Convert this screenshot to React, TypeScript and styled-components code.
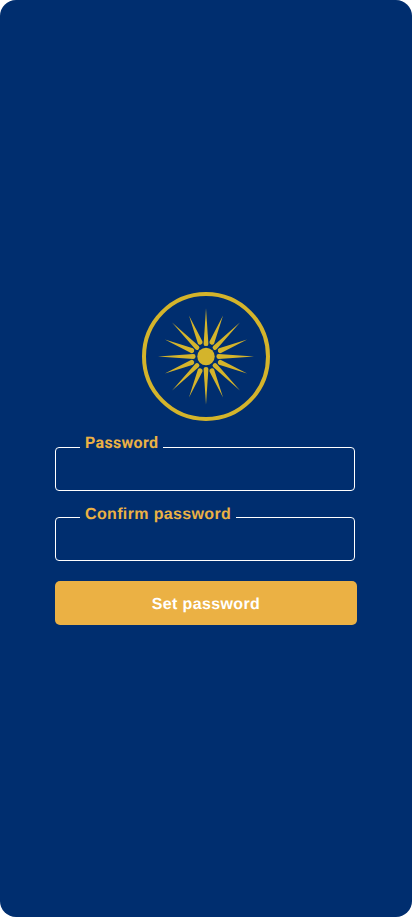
import React from "react";
import styled, { createGlobalStyle } from "styled-components";

const GlobalStyle = createGlobalStyle`
  *, *::before, *::after { box-sizing: border-box; }
  body { margin: 0; background: #ffffff; }
`;

const Screen = styled.main`
  width: 100%;
  min-height: 100vh;
  display: flex;
  flex-direction: column;
  align-items: center;
  justify-content: center;
  background: #002e6f;
  border-radius: 16px;
  font-family: "Liberation Sans", Arial, sans-serif;
`;

const Emblem = styled.svg`
  display: block;
  width: 128px;
  height: 129px;
  margin-bottom: 13px;
`;

const Form = styled.form`
  width: 302px;
  display: flex;
  flex-direction: column;
`;

const Field = styled.fieldset`
  width: 300px;
  height: 57px;
  min-width: 0;
  margin: 0 0 13px;
  padding: 0 10px 0 24px;
  border: 1px solid #ffffff;
  border-radius: 4px;
`;

const Label = styled.legend<{ $compact?: boolean }>`
  height: 27px;
  padding: 0 5px;
  line-height: ${(p) => (p.$compact ? "17px" : "21px")};
  font-family: ${(p) => (p.$compact ? 'Roboto, "Liberation Sans", sans-serif' : '"Liberation Sans", Arial, sans-serif')};
  font-size: 16px;
  font-weight: 700;
  letter-spacing: ${(p) => (p.$compact ? "0.32px" : "0.36px")};
  color: #ebb144;
  text-rendering: geometricPrecision;
`;

const Input = styled.input`
  display: block;
  width: 100%;
  height: 26px;
  padding: 0;
  border: 0;
  outline: 0;
  background: transparent;
  color: #ffffff;
  font: 16px "Liberation Sans", Arial, sans-serif;
`;

const Submit = styled.button`
  width: 302px;
  height: 44px;
  margin-top: 7px;
  padding: 4px 0 0;
  border: 0;
  border-radius: 5px;
  background: #ebb144;
  color: #ffffff;
  font: 700 16px/40px "Liberation Sans", Arial, sans-serif;
  letter-spacing: 0.36px;
  text-rendering: geometricPrecision;
`;

const LONG_RAY = "M0 -48 L2.4 -12.6 Q2.4 -10.4 0 -10.4 Q-2.4 -10.4 -2.4 -12.6 Z";
const SHORT_RAY = "M0 -44.5 L2.5 -15.2 Q2.3 -13 0 -13 Q-2.3 -13 -2.5 -15.2 Z";

function SunEmblem() {
  return (
    <Emblem viewBox="-64 -64.5 128 129" aria-hidden="true">
      <ellipse rx="62" ry="62.5" fill="none" stroke="#d4b42b" strokeWidth="4" />
      <g fill="#d4b42b">
        <circle r="8.7" />
        {Array.from({ length: 16 }, (_, i) => (
          <path key={i} d={i % 2 ? SHORT_RAY : LONG_RAY} transform={`rotate(${i * 22.5})`} />
        ))}
      </g>
    </Emblem>
  );
}

export default function App() {
  return (
    <>
      <GlobalStyle />
      <Screen>
        <SunEmblem />
        <Form onSubmit={(e) => e.preventDefault()}>
          <Field>
            <Label $compact>Password</Label>
            <Input type="password" aria-label="Password" />
          </Field>
          <Field>
            <Label>Confirm password</Label>
            <Input type="password" aria-label="Confirm password" />
          </Field>
          <Submit type="submit">Set password</Submit>
        </Form>
      </Screen>
    </>
  );
}
